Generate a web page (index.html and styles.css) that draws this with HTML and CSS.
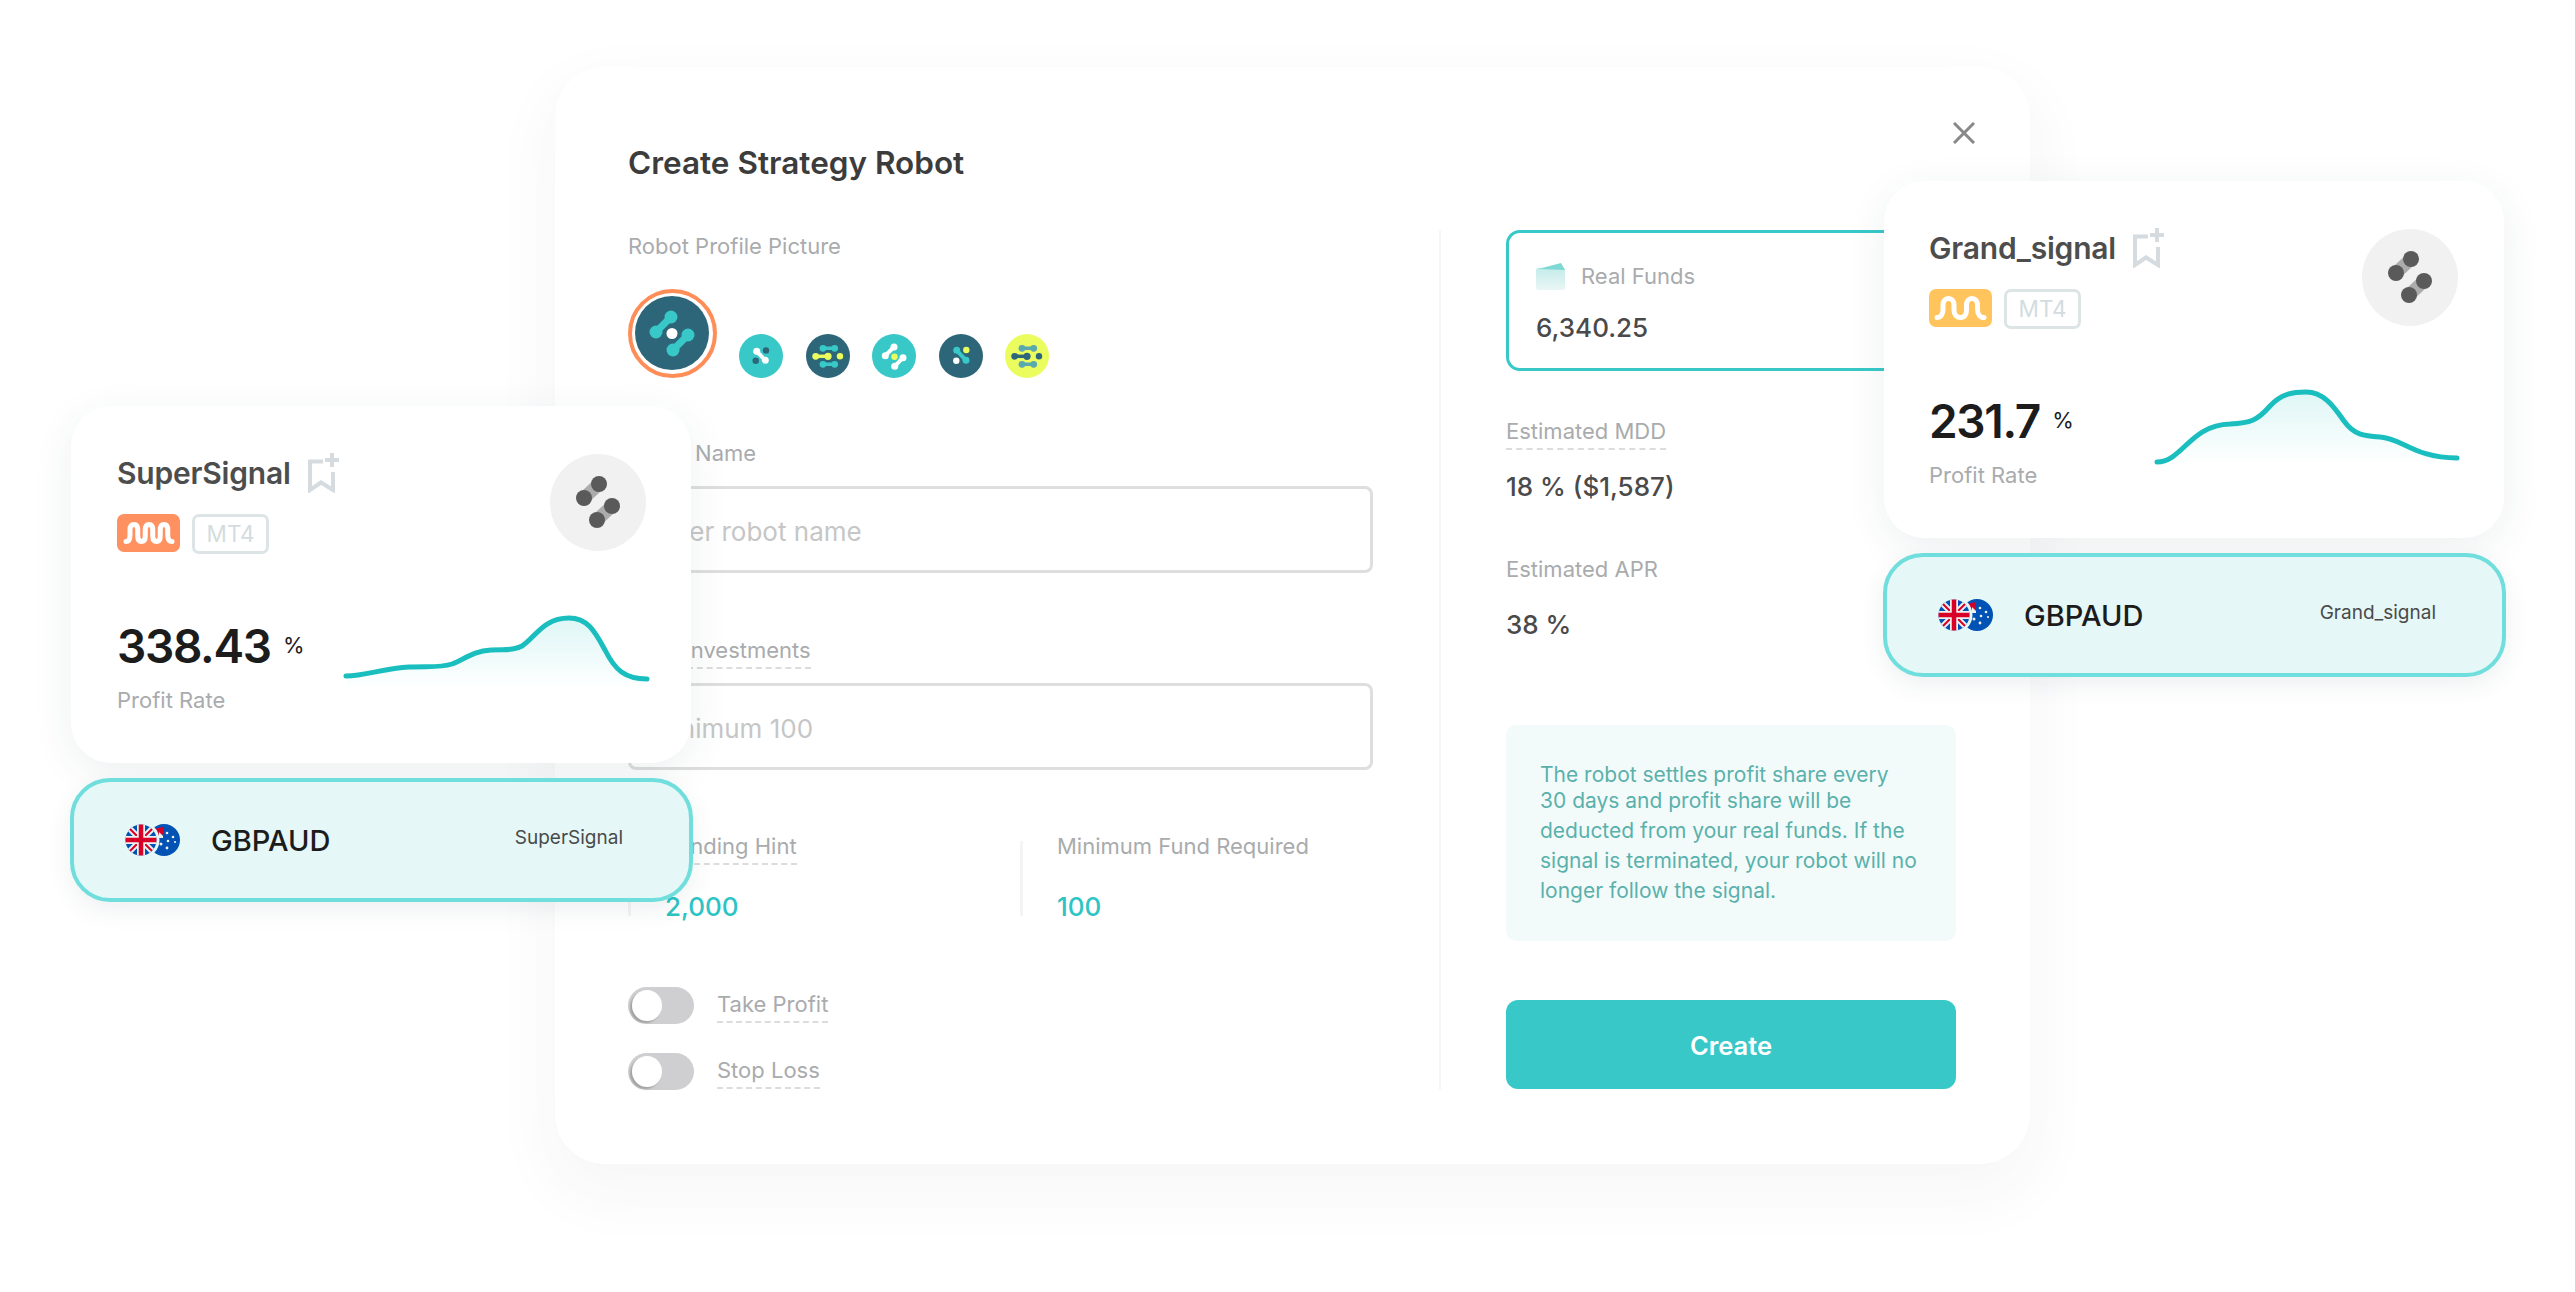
FILE: index.html
```html
<!DOCTYPE html>
<html lang="en">
<head>
    <meta charset="UTF-8">
    <meta name="viewport" content="width=device-width, initial-scale=1.0">
    <title>Create Strategy Robot</title>
    <link rel="stylesheet" href="styles.css">
</head>
<body>
    <svg class="sprites" width="0" height="0" aria-hidden="true">
        <defs>
            <clipPath id="ukClip"><circle cx="16" cy="16" r="15.5"/></clipPath>
            <symbol id="flags" viewBox="0 0 56 32">
                <circle cx="39" cy="16" r="16" fill="#0052b4"/>
                <path d="M27 5.5 L38 3 V10 L34 14 H27 Z" fill="#d80027"/>
                <path d="M34 8 L38 12 V14 H34 Z" fill="#f0f0f0"/>
                <g fill="#f0f0f0">
                    <circle cx="42" cy="9" r="1.3"/>
                    <circle cx="48" cy="13" r="1.3"/>
                    <circle cx="43" cy="17" r="1.3"/>
                    <circle cx="50" cy="18" r="1.1"/>
                    <circle cx="42" cy="24" r="1.4"/>
                    <circle cx="36" cy="20" r="1.5"/>
                </g>
                <circle cx="16" cy="16" r="18.5" fill="#e5f7f7"/>
                <g clip-path="url(#ukClip)">
                    <rect width="32" height="32" fill="#0052b4"/>
                    <path d="M0 0 L32 32 M32 0 L0 32" stroke="#f0f0f0" stroke-width="6"/>
                    <path d="M4 4 L12 12 M28 4 L20 12 M4 28 L12 20 M28 28 L20 20" stroke="#d80027" stroke-width="2"/>
                    <path d="M16 0 V32 M0 16 H32" stroke="#f0f0f0" stroke-width="8"/>
                    <path d="M16 0 V32 M0 16 H32" stroke="#d80027" stroke-width="4.5"/>
                </g>
            </symbol>
            <symbol id="bookmark" viewBox="0 0 32 40">
                <path d="M15 8.500 H2 V37 L13 29.500 L25 37 V19" fill="none" stroke="#d5dbdf" stroke-width="4"/>
                <path d="M24 0 V14 M17 7 H31" fill="none" stroke="#d5dbdf" stroke-width="4"/>
            </symbol>
            <symbol id="signalGlyph" viewBox="0 0 96 97">
                <path d="M49 30 L34 44" stroke="#acacac" stroke-width="13"/>
                <path d="M62 52 L47 66" stroke="#acacac" stroke-width="13"/>
                <g fill="#5a5a5a">
                    <circle cx="49" cy="30" r="8"/>
                    <circle cx="34" cy="44" r="8"/>
                    <circle cx="62" cy="52" r="8"/>
                    <circle cx="47" cy="66" r="8"/>
                </g>
            </symbol>
            <linearGradient id="chartFill" x1="0" y1="0" x2="0" y2="1">
                <stop offset="0" stop-color="#1abebe" stop-opacity="0.14"/>
                <stop offset="1" stop-color="#1abebe" stop-opacity="0"/>
            </linearGradient>
            <linearGradient id="walletFill" x1="0" y1="0" x2="0" y2="1">
                <stop offset="0" stop-color="#c4ecea"/>
                <stop offset="1" stop-color="#e9f6f5"/>
            </linearGradient>
        </defs>
    </svg>

    <div class="stage">
        <div class="modal">
            <svg class="close-icon" width="22" height="22" viewBox="0 0 22 22">
                <path d="M1 1 L21 21 M21 1 L1 21" stroke="#888" stroke-width="3" fill="none"/>
            </svg>
            <h1 class="modal-title">Create Strategy Robot</h1>

            <div class="modal-body">
                <div class="form-col">
                    <div class="label">Robot Profile Picture</div>
                    <div class="avatar-row">
                        <div class="avatar-selected">
                            <svg width="74" height="74" viewBox="-37 -37 74 74">
                                <circle r="37" fill="#2c6678"/>
                                <g stroke="#38c8c8" stroke-width="7" fill="#38c8c8">
                                    <path d="M-1 -16 L-16 -1"/>
                                    <path d="M16 2 L1 17"/>
                                </g>
                                <g fill="#38c8c8">
                                    <circle cx="-1" cy="-16" r="6.500"/>
                                    <circle cx="-16" cy="-1" r="6.500"/>
                                    <circle cx="16" cy="2" r="6.500"/>
                                    <circle cx="1" cy="17" r="6.500"/>
                                </g>
                                <circle cy="0.500" r="5.500" fill="#fff"/>
                            </svg>
                        </div>
                        <svg class="avatar" width="44" height="44" viewBox="-22 -22 44 44">
                            <circle r="22" fill="#38c8c8"/>
                            <path d="M-4.300 -4.700 L4.300 4.300" stroke="#fff" stroke-width="4"/>
                            <circle cx="-4.300" cy="-4.700" r="3.500" fill="#fff"/>
                            <circle cx="4.300" cy="4.300" r="3.500" fill="#fff"/>
                            <circle cx="5" cy="-5.600" r="3.200" fill="#2c6678"/>
                            <circle cx="-5.300" cy="4.700" r="3.200" fill="#2c6678"/>
                        </svg>
                        <svg class="avatar" width="44" height="44" viewBox="-22 -22 44 44">
                            <circle r="22" fill="#2c6678"/>
                            <path d="M-5 -7.700 H6.700 M-5 8.300 H6.700" stroke="#38c8c8" stroke-width="3.500"/>
                            <path d="M-12.300 .3 H0" stroke="#ebfc5f" stroke-width="3.500"/>
                            <g fill="#38c8c8">
                                <circle cx="-5" cy="-7.700" r="3.400"/>
                                <circle cx="6.700" cy="-7.700" r="3.400"/>
                                <circle cx="-5" cy="8.300" r="3.400"/>
                                <circle cx="6.700" cy="8.300" r="3.400"/>
                            </g>
                            <g fill="#ebfc5f">
                                <circle cx="-12.300" cy=".3" r="3.400"/>
                                <circle cy=".3" r="3.600"/>
                                <circle cx="12" cy=".3" r="3.200"/>
                            </g>
                        </svg>
                        <svg class="avatar" width="44" height="44" viewBox="-22 -22 44 44">
                            <circle r="22" fill="#38c8c8"/>
                            <path d="M0 -9 L-8.700 -.3 M9 1.700 L.7 10.300" stroke="#fff" stroke-width="4"/>
                            <g fill="#fff">
                                <circle cy="-9" r="3.500"/>
                                <circle cx="-8.700" cy="-.3" r="3.500"/>
                                <circle cx="9" cy="1.700" r="3.500"/>
                                <circle cx=".7" cy="10.300" r="3.500"/>
                            </g>
                            <circle cx=".5" cy=".7" r="3.200" fill="#ebfc5f"/>
                        </svg>
                        <svg class="avatar" width="44" height="44" viewBox="-22 -22 44 44">
                            <circle r="22" fill="#2c6678"/>
                            <path d="M-4.300 -5.700 L5 4.300" stroke="#38c8c8" stroke-width="4"/>
                            <circle cx="-4.300" cy="-5.700" r="3.500" fill="#38c8c8"/>
                            <circle cx="5" cy="4.300" r="3.500" fill="#38c8c8"/>
                            <circle cx="5.300" cy="-6" r="3.200" fill="#ebfc5f"/>
                            <circle cx="-4.700" cy="4.700" r="3.200" fill="#fff"/>
                        </svg>
                        <svg class="avatar" width="44" height="44" viewBox="-22 -22 44 44">
                            <circle r="22" fill="#ebfc5f"/>
                            <path d="M-5 -7.700 H6.700 M-5 8.300 H6.700" stroke="#5aa8b0" stroke-width="3.500"/>
                            <path d="M-12.300 .3 H0" stroke="#2c6678" stroke-width="3.500"/>
                            <g fill="#5aa8b0">
                                <circle cx="-5" cy="-7.700" r="3.400"/>
                                <circle cx="6.700" cy="-7.700" r="3.400"/>
                                <circle cx="-5" cy="8.300" r="3.400"/>
                                <circle cx="6.700" cy="8.300" r="3.400"/>
                            </g>
                            <g fill="#2c6678">
                                <circle cx="-12.300" cy=".3" r="3.400"/>
                                <circle cy=".3" r="3.600"/>
                                <circle cx="12" cy=".3" r="3.200"/>
                            </g>
                        </svg>
                    </div>

                    <div class="field field-name">
                        <div class="label">Robot Name</div>
                        <input class="text-input" type="text" placeholder="Enter robot name">
                    </div>
                    <div class="field field-invest">
                        <div class="label hint">Total Investments</div>
                        <input class="text-input" type="text" placeholder="Minimum 100">
                    </div>

                    <div class="stats">
                        <div class="stat">
                            <div class="label hint">Funding Hint</div>
                            <div class="stat-value">2,000</div>
                        </div>
                        <div class="stat">
                            <div class="label stat-plain">Minimum Fund Required</div>
                            <div class="stat-value">100</div>
                        </div>
                    </div>

                    <div class="toggles">
                        <div class="toggle-row">
                            <span class="toggle"></span>
                            <span class="label hint">Take Profit</span>
                        </div>
                        <div class="toggle-row">
                            <span class="toggle"></span>
                            <span class="label hint">Stop Loss</span>
                        </div>
                    </div>
                </div>

                <div class="side-col">
                    <div class="funds-card">
                        <div class="funds-head">
                            <svg width="29" height="27" viewBox="0 0 29 27">
                                <rect y="5" width="29" height="22" rx="2" fill="url(#walletFill)"/>
                                <path d="M2 6 L25 0 L29 7 Z" fill="#7fd8d4"/>
                            </svg>
                            <span class="label">Real Funds</span>
                        </div>
                        <div class="funds-value">6,340.25</div>
                    </div>

                    <div class="label hint side-mdd">Estimated MDD</div>
                    <div class="side-value side-value-mdd">18 % ($1,587)</div>
                    <div class="label side-apr">Estimated APR</div>
                    <div class="side-value side-value-apr">38 %</div>

                    <div class="note">
                        <span class="note-lead">The robot settles profit share every</span>
                        30 days and profit share will be deducted from your real funds. If the signal is terminated, your robot will no longer follow the signal.
                    </div>

                    <button class="create-btn">Create</button>
                </div>
            </div>
        </div>

        <div class="signal signal-left">
            <div class="signal-card">
                <div class="card-head">
                    <div>
                        <div class="card-title">
                            <span>SuperSignal</span>
                            <svg class="bookmark" width="32" height="40"><use href="#bookmark"/></svg>
                        </div>
                        <div class="tags">
                            <span class="wave-tag wave-orange">
                                <svg width="63" height="38" viewBox="0 0 63 38">
                                    <path d="M9 27.500 C12 27.500 13 25 13 21 V16 C13 12.500 14.500 10.500 17 10.500 C19.500 10.500 20.750 12.500 20.750 16 V22 C20.750 25.500 22 27.500 24.500 27.500 C27 27.500 28.250 25.500 28.250 22 V16 C28.250 12.500 29.500 10.500 32 10.500 C34.500 10.500 35.750 12.500 35.750 16 V22 C35.750 25.500 37 27.500 39.500 27.500 C42 27.500 43.250 25.500 43.250 22 V16 C43.250 12.500 44.500 10.500 47 10.500 C49.500 10.500 50.750 12.500 50.750 16 V21 C50.750 25 52 27.500 55 27.500" fill="none" stroke="#fff" stroke-width="5" stroke-linecap="round"/>
                                </svg>
                            </span>
                            <span class="mt-tag">MT4</span>
                        </div>
                    </div>
                    <svg class="signal-avatar" width="96" height="97"><use href="#signalGlyph"/></svg>
                </div>
                <div class="card-stats">
                    <div class="profit">
                        <div class="profit-value">338.43 <span class="profit-unit">%</span></div>
                        <div class="label profit-label">Profit Rate</div>
                    </div>
                    <svg class="chart" width="310" height="90" viewBox="0 0 310 90">
                        <path d="M6 76 C25 76 45 68 69 67 C88 66 100 68 112 64 C125 59 133 51 151 50 C165 49 173 51 182 46 C195 38 203 18 229 18 C248 18 255 32 265 50 C275 70 285 79 307 79 V90 H6 Z" fill="url(#chartFill)"/>
                        <path d="M6 76 C25 76 45 68 69 67 C88 66 100 68 112 64 C125 59 133 51 151 50 C165 49 173 51 182 46 C195 38 203 18 229 18 C248 18 255 32 265 50 C275 70 285 79 307 79" fill="none" stroke="#1abebe" stroke-width="5" stroke-linecap="round"/>
                    </svg>
                </div>
            </div>
            <div class="pair-bar">
                <svg width="56" height="32"><use href="#flags"/></svg>
                <span class="pair-name">GBPAUD</span>
                <span class="pair-owner">SuperSignal</span>
            </div>
        </div>

        <div class="signal signal-right">
            <div class="signal-card">
                <div class="card-head">
                    <div>
                        <div class="card-title">
                            <span>Grand_signal</span>
                            <svg class="bookmark" width="32" height="40"><use href="#bookmark"/></svg>
                        </div>
                        <div class="tags">
                            <span class="wave-tag wave-yellow">
                                <svg width="63" height="38" viewBox="0 0 63 38">
                                    <path d="M8 28.500 C12 28.500 14 25 14 20 V16 C14 12 16 9.500 19.500 9.500 C23 9.500 25 12 25 16 V21 C25 25.500 27.500 28.500 31.500 28.500 C35.500 28.500 37.500 25.500 37.500 21 V16 C37.500 12 39.500 9.500 43 9.500 C46.500 9.500 48.500 12 48.500 16 V20 C48.500 25 51 28.500 55 28.500" fill="none" stroke="#fff" stroke-width="5" stroke-linecap="round"/>
                                </svg>
                            </span>
                            <span class="mt-tag">MT4</span>
                        </div>
                    </div>
                    <svg class="signal-avatar" width="96" height="97"><use href="#signalGlyph"/></svg>
                </div>
                <div class="card-stats">
                    <div class="profit">
                        <div class="profit-value">231.7 <span class="profit-unit">%</span></div>
                        <div class="label profit-label">Profit Rate</div>
                    </div>
                    <svg class="chart" width="310" height="90" viewBox="0 0 310 90">
                        <path d="M5 87 C30 87 38 50 78 49 C98 48 105 46 118 31 C130 18 142 17 154 17 C172 17 182 32 192 46 C202 60 212 61 228 62 C250 63 262 83 305 83 V90 H5 Z" fill="url(#chartFill)"/>
                        <path d="M5 87 C30 87 38 50 78 49 C98 48 105 46 118 31 C130 18 142 17 154 17 C172 17 182 32 192 46 C202 60 212 61 228 62 C250 63 262 83 305 83" fill="none" stroke="#1abebe" stroke-width="5" stroke-linecap="round"/>
                    </svg>
                </div>
            </div>
            <div class="pair-bar">
                <svg width="56" height="32"><use href="#flags"/></svg>
                <span class="pair-name">GBPAUD</span>
                <span class="pair-owner">Grand_signal</span>
            </div>
        </div>
    </div>
</body>
</html>
```

FILE: styles.css
```css
* {
    margin: 0;
    padding: 0;
    box-sizing: border-box;
    font-family: 'Inter', 'Liberation Sans', sans-serif;
}

body {
    background-color: #fff;
}

.sprites {
    position: absolute;
}

.stage {
    position: relative;
    width: 2575px;
    height: 1292px;
    padding: 67px 0 0 555px;
    overflow: hidden;
}

/* modal */
.modal {
    position: relative;
    width: 1475px;
    height: 1097px;
    padding: 76px 74px 0 73px;
    background-color: #fff;
    border-radius: 50px;
    box-shadow: 0 25px 60px 10px rgba(40, 60, 70, 0.04);
}

.close-icon {
    position: absolute;
    top: 55px;
    right: 55px;
}

.modal-title {
    font-size: 31.500px;
    line-height: 40px;
    font-weight: 600;
    color: #3c3c3c;
    margin-bottom: 47px;
}

.modal-body {
    display: grid;
    grid-template-columns: 813px 450px;
    column-gap: 65px;
    height: 860px;
}

.label {
    font-size: 22px;
    line-height: 32px;
    color: #a9abad;
}

.hint {
    display: block;
    width: fit-content;
    padding-bottom: 1px;
    border-bottom: 2px dashed #dcdcdc;
}

.form-col {
    padding-right: 66px;
    border-right: 2px solid #f6f6f6;
}

.avatar-row {
    display: flex;
    align-items: flex-end;
    gap: 22.400px;
    margin-top: 27px;
}

.avatar-selected {
    width: 89px;
    height: 89px;
    padding: 3px;
    border: 4px solid #ff8d57;
    border-radius: 50%;
}

.avatar-selected svg,
.avatar {
    display: block;
}

.field-name {
    margin-top: 59px;
}

.field-invest {
    margin-top: 61px;
}

.text-input {
    display: block;
    width: 100%;
    height: 87px;
    margin-top: 17px;
    padding: 3px 19px 0;
    border: 3px solid #dedede;
    border-radius: 8px;
    font-size: 26px;
    color: #444;
    background-color: #fff;
}

.text-input::placeholder {
    color: #c6c6c6;
}

.field-invest .text-input {
    margin-top: 14px;
}

.stats {
    display: grid;
    grid-template-columns: 392px 1fr;
    margin-top: 60px;
}

.stat {
    position: relative;
    padding-left: 37px;
}

.stat::before {
    content: '';
    position: absolute;
    left: 0;
    top: 11px;
    bottom: 7px;
    width: 3px;
    background-color: #f4f4f4;
}

.stat-plain {
    padding-bottom: 3px;
}

.stat-value {
    margin-top: 26px;
    font-size: 26px;
    line-height: 32px;
    font-weight: 500;
    color: #2cc4c4;
}

.toggles {
    display: flex;
    flex-direction: column;
    gap: 29px;
    margin-top: 64px;
}

.toggle-row {
    display: flex;
    align-items: center;
    gap: 23px;
    height: 37px;
}

.toggle {
    position: relative;
    width: 66px;
    height: 37px;
    border-radius: 19px;
    background-color: #cfcfd1;
}

.toggle::after {
    content: '';
    position: absolute;
    left: 4px;
    top: 3px;
    width: 30px;
    height: 31px;
    border-radius: 50%;
    background-color: #fff;
    box-shadow: -2px 2px 2px rgba(0, 0, 0, 0.22);
}

/* right column */
.funds-card {
    height: 141px;
    padding: 27px 27px 0;
    border: 3px solid #38c8c8;
    border-radius: 14px;
}

.funds-head {
    display: flex;
    align-items: center;
    gap: 16px;
}

.funds-value {
    margin-top: 19px;
    font-size: 26px;
    line-height: 34px;
    font-weight: 500;
    color: #4a4a4a;
}

.side-mdd {
    margin-top: 44px;
}

.side-value {
    font-size: 26px;
    line-height: 34px;
    font-weight: 500;
    color: #4a4a4a;
}

.side-value-mdd {
    margin-top: 20px;
}

.side-apr {
    margin-top: 49px;
}

.side-value-apr {
    margin-top: 23px;
}

.note {
    height: 216px;
    margin-top: 83px;
    padding: 39px 36px 0 34px;
    border-radius: 10px;
    background-color: #f3fbfa;
    font-size: 21px;
    line-height: 30px;
    color: #5ab1ac;
}

.note-lead {
    display: block;
    line-height: 22px;
}

.create-btn {
    display: block;
    width: 100%;
    height: 89px;
    margin-top: 59px;
    padding-top: 2px;
    border: none;
    border-radius: 12px;
    background-color: #38c8c8;
    color: #fff;
    font-size: 25.500px;
    font-weight: 600;
}

/* floating signal cards */
.signal {
    position: absolute;
    width: 620px;
}

.signal-left {
    left: 71px;
    top: 406px;
}

.signal-right {
    left: 1884px;
    top: 181px;
}

.signal-card {
    height: 357px;
    padding: 48px 45px 0 46px;
    border-radius: 40px;
    background-color: #fff;
    box-shadow: 0 10px 40px rgba(40, 70, 80, 0.08);
}

.signal-right .signal-card {
    padding-left: 45px;
    padding-right: 46px;
}

.card-head {
    display: flex;
    justify-content: space-between;
    align-items: flex-start;
}

.card-title {
    display: flex;
    align-items: center;
    gap: 17px;
    height: 40px;
    margin-top: -1px;
    font-size: 30px;
    font-weight: 600;
    letter-spacing: -0.2px;
    color: #4d4d4d;
}

.bookmark {
    display: block;
    margin-top: -1px;
}

.tags {
    display: flex;
    align-items: flex-start;
    gap: 12px;
    margin-top: 21px;
}

.wave-tag {
    display: block;
    width: 63px;
    height: 38px;
    border-radius: 7px;
}

.wave-tag svg {
    display: block;
}

.wave-orange {
    background-color: #ff9060;
}

.wave-yellow {
    background-color: #ffc45c;
}

.mt-tag {
    width: 77px;
    height: 40px;
    border: 3px solid #dde4e6;
    border-radius: 7px;
    font-size: 22.500px;
    line-height: 34px;
    text-align: center;
    color: #d3dcde;
}

.signal-avatar {
    display: block;
    border-radius: 50%;
    background-color: #f1f1f1;
}

.card-stats {
    display: flex;
    margin-top: 46px;
    margin-right: -4px;
}

.profit {
    width: 223px;
    padding-top: 18px;
}

.profit-value {
    font-size: 46px;
    line-height: 56px;
    font-weight: 600;
    letter-spacing: -1.300px;
    color: #1c1c1c;
    white-space: nowrap;
}

.profit-unit {
    position: relative;
    top: -10px;
    margin-left: 2px;
    font-size: 22px;
    font-weight: 400;
    letter-spacing: 0;
}

.profit-label {
    margin-top: 2px;
    line-height: 30px;
}

.chart {
    display: block;
}

.pair-bar {
    display: flex;
    align-items: center;
    width: 623px;
    height: 124px;
    margin: 15px 0 0 -1px;
    padding: 0 66px 0 51px;
    border: 4px solid #6fdedc;
    border-radius: 40px;
    background-color: #e5f7f7;
    box-shadow: 0 8px 24px rgba(40, 70, 80, 0.08);
}

.pair-name {
    margin-left: 30px;
    font-size: 29px;
    font-weight: 500;
    color: #1c1c1c;
}

.pair-owner {
    margin-left: auto;
    margin-top: -5px;
    font-size: 19px;
    color: #4a4a4a;
}
```
